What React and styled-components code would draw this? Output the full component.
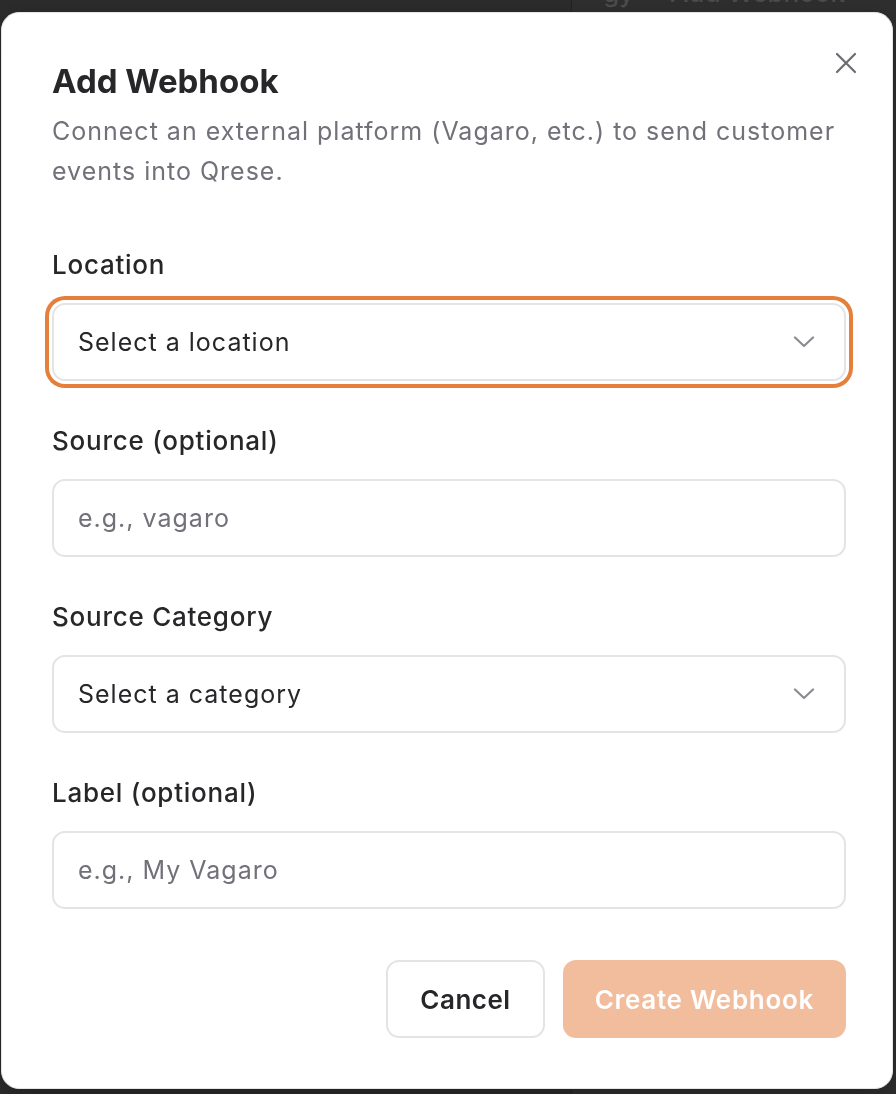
import React from 'react';
import styled, { createGlobalStyle } from 'styled-components';

const GlobalStyle = createGlobalStyle`
  html, body {
    margin: 0;
    padding: 0;
    background: #2d2d2d;
    font-family: Inter, "Noto Sans", "Liberation Sans", sans-serif;
    -webkit-font-smoothing: antialiased;
  }
`;

// dimmed page that sits behind the dialog
const Backdrop = styled.div`
  height: 1094px;
  display: flex;
  overflow: hidden;
`;

const BackdropMain = styled.div`
  width: 571px;
  background: #2c2c2c;
  border-right: 1px solid #242424;
`;

const BackdropSide = styled.div`
  flex: 1;
  background: #2f2f2f;
  display: flex;
  gap: 36px;
  padding-left: 31px;
  margin-top: -21px;
  font-size: 26px;
  font-weight: 500;
  line-height: 28px;
  color: #4d4d4d;
`;

const Overlay = styled.div`
  position: fixed;
  inset: 0;
`;

const Dialog = styled.div`
  position: absolute;
  left: 1px;
  top: 12px;
  width: 892px;
  box-sizing: border-box;
  padding: 48px 46px 50px 50px;
  background: #fff;
  border: 1px solid #e4e4e7;
  border-radius: 18px;
  box-shadow: 0 10px 30px rgba(0, 0, 0, 0.25);
  display: flex;
  flex-direction: column;
`;

const CloseButton = styled.button`
  position: absolute;
  top: 39px;
  right: 35px;
  width: 22px;
  height: 22px;
  padding: 0;
  border: none;
  background: none;
  display: flex;
  align-items: center;
  justify-content: center;
  cursor: pointer;
`;

const Title = styled.h2`
  margin: 0;
  font-size: 33px;
  line-height: 40px;
  font-weight: 700;
  color: #27272a;
`;

const Description = styled.p`
  margin: 10px 0 0;
  font-size: 25px;
  line-height: 40px;
  letter-spacing: 1px;
  color: #71717a;
`;

const Form = styled.div`
  margin-top: 56px;
  display: flex;
  flex-direction: column;
  gap: 42px;
`;

const Field = styled.div`
  display: flex;
  flex-direction: column;
  gap: 20px;
`;

const Label = styled.label`
  font-size: 26px;
  line-height: 36px;
  font-weight: 500;
  letter-spacing: 0.75px;
  color: #27272a;
`;

const Box = styled.div`
  height: 78px;
  box-sizing: border-box;
  border: 2px solid #e4e4e7;
  border-radius: 13px;
  padding: 0 29px 0 24px;
  display: flex;
  align-items: center;
  justify-content: space-between;
  font-size: 25px;
  letter-spacing: 1px;
  color: ${p => (p.$placeholder ? '#71717a' : '#27272a')};
  box-shadow: ${p => (p.$focused ? '0 0 0 3px #fff, 0 0 0 7px #e5803c' : 'none')};
  background: #fff;
`;

const Footer = styled.div`
  margin-top: 51px;
  display: flex;
  justify-content: flex-end;
  gap: 18px;
`;

const Button = styled.button`
  height: 78px;
  box-sizing: border-box;
  padding: 0 32px;
  border-radius: 13px;
  font-family: inherit;
  font-size: 26px;
  font-weight: 600;
  letter-spacing: ${p => (p.$primary ? '0.7px' : '0.5px')};
  border: ${p => (p.$primary ? 'none' : '2px solid #e4e4e7')};
  background: ${p => (p.$primary ? '#f1bd9c' : '#fff')};
  color: ${p => (p.$primary ? '#fff' : '#27272a')};
`;

const Chevron = () => (
  <svg width="22" height="12" viewBox="0 0 22 12" fill="none">
    <path d="M2 1.5 11 10 20 1.5" stroke="#8b8b92" strokeWidth="2.2" strokeLinecap="round" strokeLinejoin="round" />
  </svg>
);

const CloseIcon = () => (
  <svg width="22" height="22" viewBox="0 0 22 22" fill="none">
    <path d="M2 2 20 20M20 2 2 20" stroke="#6b6b72" strokeWidth="2.2" strokeLinecap="round" />
  </svg>
);

const fields = [
  { label: 'Location', text: 'Select a location', select: true, focused: true },
  { label: 'Source (optional)', text: 'e.g., vagaro', placeholder: true },
  { label: 'Source Category', text: 'Select a category', select: true },
  { label: 'Label (optional)', text: 'e.g., My Vagaro', placeholder: true },
];

export default function App() {
  return (
    <>
      <GlobalStyle />
      <Backdrop>
        <BackdropMain />
        <BackdropSide>
          <span>gy</span>
          <span>Add Webhook</span>
        </BackdropSide>
      </Backdrop>
      <Overlay>
        <Dialog>
          <CloseButton aria-label="Close">
            <CloseIcon />
          </CloseButton>
          <Title>Add Webhook</Title>
          <Description>
            Connect an external platform (Vagaro, etc.) to send customer events into Qrese.
          </Description>
          <Form>
            {fields.map(f => (
              <Field key={f.label}>
                <Label>{f.label}</Label>
                <Box $placeholder={f.placeholder} $focused={f.focused}>
                  <span>{f.text}</span>
                  {f.select && <Chevron />}
                </Box>
              </Field>
            ))}
          </Form>
          <Footer>
            <Button>Cancel</Button>
            <Button $primary>Create Webhook</Button>
          </Footer>
        </Dialog>
      </Overlay>
    </>
  );
}
